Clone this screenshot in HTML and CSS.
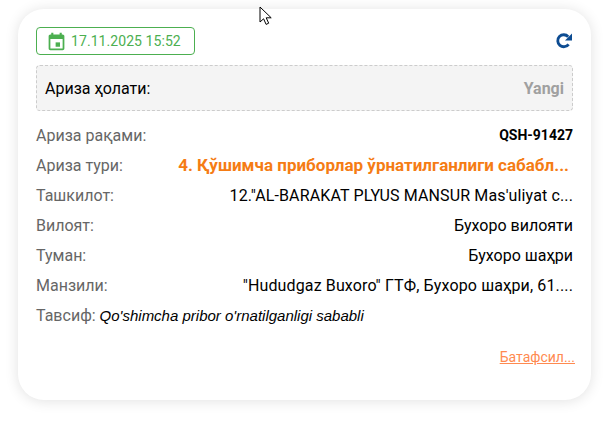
FILE: index.html
```html
<!DOCTYPE html>
<html lang="uz">
<head>
    <meta charset="UTF-8">
    <title>Ариза</title>
    <link rel="stylesheet" href="styles.css">
</head>
<body>
    <div class="card">
        <div class="card-top">
            <div class="date-badge">
                <svg class="date-icon" viewBox="0 0 24 24"><path d="M19 4h-1V2h-2.4v2H8.400V2H6v2H5c-1.100 0-2 .9-2 2v14c0 1.100.9 2 2 2h14c1.100 0 2-.9 2-2V6c0-1.100-.9-2-2-2zm0 16H5V9h14v11z"/><path d="M11 13h5v5h-5z"/></svg>
                <span>17.11.2025 15:52</span>
            </div>
            <svg class="refresh-icon" viewBox="0 0 18 18"><path class="refresh-arc" d="M13.600 12.300A6 6 0 1 1 13.200 4.700"/><path class="refresh-head" d="M17 1.500V8.500H10z"/></svg>
        </div>

        <div class="status-box">
            <span>Ариза ҳолати:</span>
            <span class="status-value">Yangi</span>
        </div>

        <div class="info-row">
            <span class="info-label">Ариза рақами:</span>
            <span class="info-value number">QSH-91427</span>
        </div>
        <div class="info-row">
            <span class="info-label">Ариза тури:</span>
            <span class="info-value type">4. Қўшимча приборлар ўрнатилганлиги сабабл...</span>
        </div>
        <div class="info-row">
            <span class="info-label">Ташкилот:</span>
            <span class="info-value latin">12."AL-BARAKAT PLYUS MANSUR Mas'uliyat c...</span>
        </div>
        <div class="info-row">
            <span class="info-label">Вилоят:</span>
            <span class="info-value">Бухоро вилояти</span>
        </div>
        <div class="info-row">
            <span class="info-label">Туман:</span>
            <span class="info-value">Бухоро шаҳри</span>
        </div>
        <div class="info-row">
            <span class="info-label">Манзили:</span>
            <span class="info-value latin">"Hududgaz Buxoro" ГТФ, Бухоро шаҳри, 61....</span>
        </div>
        <div class="info-row">
            <span class="info-label">Тавсиф: <em class="description">Qo'shimcha pribor o'rnatilganligi sababli</em></span>
        </div>

        <div class="card-bottom">
            <a class="more-link" href="#">Батафсил...</a>
        </div>
    </div>

    <svg class="cursor" viewBox="0 0 14 20"><path d="M1 1v15l3.600-3.200 2.500 5.600 2.600-1.200-2.500-5.400h5z"/></svg>
</body>
</html>
```

FILE: styles.css
```css
body {
    margin: 0;
    padding-bottom: 37px;
    background-color: #ffffff;
    font-family: Roboto, "Liberation Sans", sans-serif;
    font-size: 16px;
}

.card {
    box-sizing: border-box;
    width: 573px;
    height: 391px;
    margin: 9px 0 0 18px;
    padding: 18px;
    background-color: #ffffff;
    border-radius: 26px;
    box-shadow: 0 1px 14px rgba(0, 0, 0, 0.12);
}

.card-top {
    display: flex;
    justify-content: space-between;
    align-items: center;
    margin-bottom: 10px;
}

.date-badge {
    display: flex;
    align-items: center;
    gap: 4px;
    box-sizing: border-box;
    width: 159px;
    height: 28px;
    padding-left: 9px;
    border: 1px solid #4caf50;
    border-radius: 4px;
    color: #4caf50;
    font-size: 14px;
    letter-spacing: 0.07px;
}

.date-icon {
    width: 21px;
    height: 21px;
    fill: #4caf50;
}

.refresh-icon {
    width: 18px;
    height: 18px;
}

.refresh-arc {
    fill: none;
    stroke: #0d4c92;
    stroke-width: 2.800;
}

.refresh-head {
    fill: #0d4c92;
}

.status-box {
    display: flex;
    justify-content: space-between;
    align-items: center;
    box-sizing: border-box;
    height: 46px;
    margin-bottom: 9px;
    padding: 0 8px;
    background-color: #f4f4f4;
    border: 1px dashed #cccccc;
    border-radius: 4px;
    color: #000000;
}

.status-value {
    color: #a0a0a0;
    font-weight: bold;
}

.info-row {
    display: flex;
    justify-content: space-between;
    align-items: center;
    height: 30px;
    white-space: nowrap;
}

.info-label {
    color: #666666;
}

.info-value {
    color: #000000;
}

.latin {
    letter-spacing: 0.13px;
}

.number {
    font-size: 14px;
    font-weight: bold;
}

.type {
    padding-right: 4px;
    color: #f57c14;
    font-size: 17px;
    font-weight: bold;
}

.description {
    color: #000000;
    font-family: "Liberation Sans", sans-serif;
    font-size: 15px;
}

.card-bottom {
    display: flex;
    justify-content: flex-end;
    margin-top: 19px;
    margin-right: -2px;
}

.more-link {
    color: #ff8a50;
    font-size: 14px;
}

.cursor {
    position: absolute;
    left: 259px;
    top: 6px;
    width: 14px;
    height: 20px;
    fill: #ffffff;
    stroke: #000000;
    stroke-width: 1;
}
```
